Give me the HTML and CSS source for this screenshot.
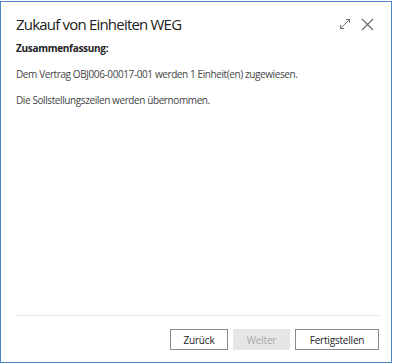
FILE: index.html
```html
<!doctype html>
<html>
<head>
<meta charset="UTF-8">
<title>Zukauf von Einheiten WEG</title>
<link rel="stylesheet" href="styles.css">
</head>
<body>
  <div class="dialog">
    <div class="dialog-head">
      <div class="dialog-title">Zukauf von Einheiten WEG</div>
      <div class="dialog-tools">
        <svg class="tool" width="12" height="12" viewBox="0 0 12 12">
          <path d="M1.5 10.5 L10.5 1.5 M1.5 10.5 L1.5 7 M1.5 10.5 L5 10.5 M10.5 1.5 L7 1.5 M10.5 1.5 L10.5 5" stroke="#777" stroke-width="1" fill="none"/>
        </svg>
        <svg class="tool" width="13" height="13" viewBox="0 0 13 13">
          <path d="M1 1 L12 12 M12 1 L1 12" stroke="#666" stroke-width="1.1" fill="none"/>
        </svg>
      </div>
    </div>
    <div class="dialog-body">
      <p class="summary">Zusammenfassung:</p>
      <p>Dem Vertrag OBJ006-00017-001 werden 1 Einheit(en) zugewiesen.</p>
      <p>Die Sollstellungszeilen werden übernommen.</p>
    </div>
    <div class="dialog-foot">
      <button class="btn btn-back">Zurück</button>
      <button class="btn btn-next btn-off">Weiter</button>
      <button class="btn btn-finish">Fertigstellen</button>
    </div>
  </div>
</body>
</html>
```

FILE: styles.css
```css
*{
	box-sizing: border-box;
}
html, body{
	width:100%;
	height:100%;
	overflow:hidden;
}
body{
	margin:0;
	padding:0;
	background:#fff;
	font-family:"Open Sans", "Noto Sans", sans-serif;
}
.dialog{
	width:392px;
	height:362px;
	margin-top:1px;
	border:1.5px solid #4f85c6;
	background:#fff;
	display:flex;
	flex-direction:column;
}
.dialog-head{
	display:flex;
	align-items:center;
	justify-content:space-between;
	padding:8px 17px 0 15px;
	height:36px;
}
.dialog-title{
	font-size:15px;
	letter-spacing:-0.8px;
	color:#212121;
}
.dialog-tools{
	display:flex;
	align-items:center;
	gap:10px;
}
.dialog-body{
	flex:1;
	padding:0 15px;
	font-size:10px;
	letter-spacing:-0.4px;
	color:#444;
}
.dialog-body p{
	margin:0 0 15px;
	line-height:11px;
}
.summary{
	font-weight:bold;
	color:#222;
	margin-top:5px !important;
	letter-spacing:-0.3px;
}
.dialog-foot{
	margin:0 12px 0 15px;
	border-top:1px solid #e3e3e3;
	padding:13px 0 12px;
	display:flex;
	justify-content:flex-end;
	gap:5px;
}
.btn{
	height:21px;
	padding:0;
	border:1px solid #8a8a8a;
	background:#fff;
	font-family:inherit;
	font-size:10px;
	letter-spacing:-0.2px;
	color:#222;
}
.btn-back{
	width:58px;
}
.btn-next{
	width:57px;
}
.btn-finish{
	width:84px;
}
.btn-off{
	background:#e6e6e6;
	border-color:#e6e6e6;
	color:#a8a8a8;
}
```
